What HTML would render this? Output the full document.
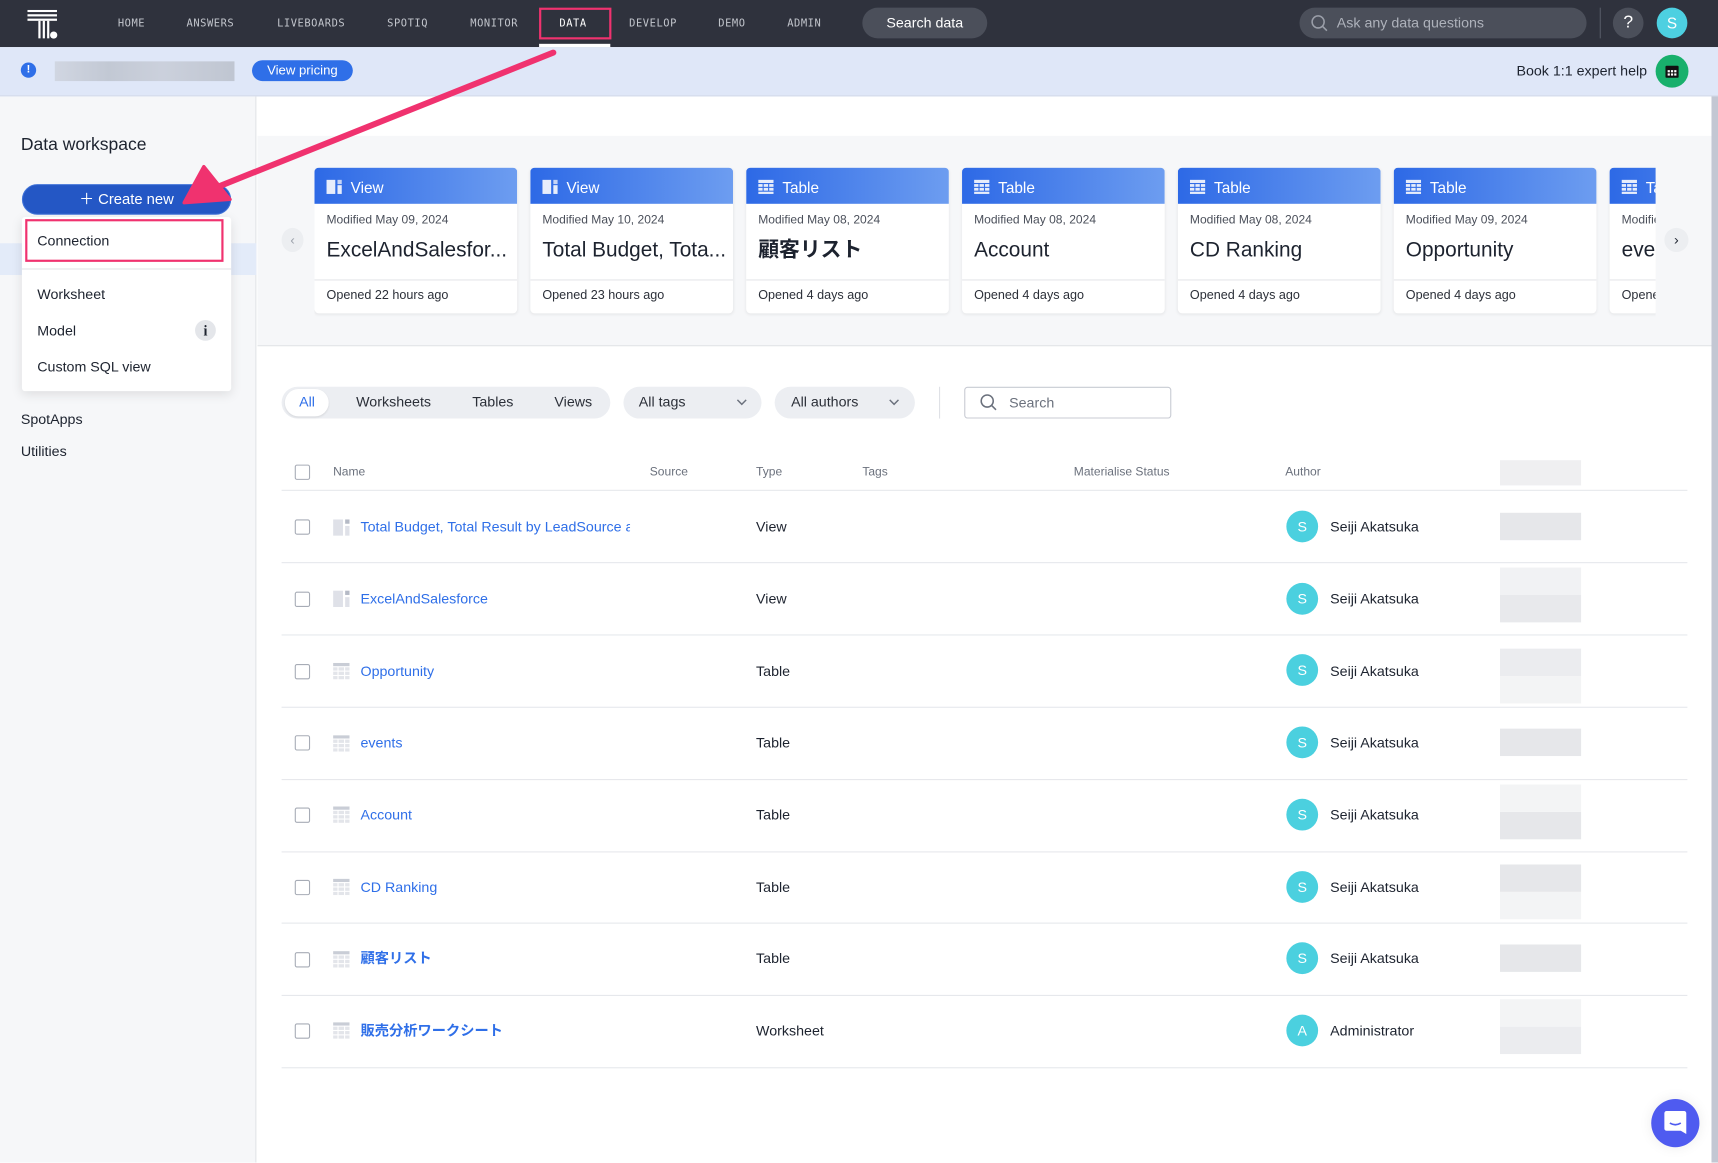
<!DOCTYPE html>
<html><head><meta charset="utf-8">
<style>
*{box-sizing:border-box;margin:0;padding:0}
html,body{width:1718px;height:1163px;overflow:hidden;background:#fff}
body{font-family:"Liberation Sans","Noto Sans CJK JP",sans-serif;color:#1d232f}
#w{position:absolute;left:0;top:0;width:1568px;height:1061px;transform:scale(1.0957);transform-origin:0 0;overflow:hidden;background:#fff}
.a{position:absolute}
.nav{left:0;top:0;width:1568px;height:43px;background:#2f323d}
.ni{top:16px;font-family:"DejaVu Sans Mono","Liberation Mono",monospace;font-size:9.5px;color:#c3c6cd;letter-spacing:.5px;transform:translateX(-50%)}
.card{width:185px;height:133px;top:153px;background:#fff;border-radius:4px;box-shadow:0 1px 3px rgba(0,0,0,.08);overflow:hidden}
.card .h{height:33px;background:linear-gradient(90deg,#2d69e6,#6d9df0);color:#fff;font-size:14px;padding:10px 0 0 33px;position:relative}
.card .h i{position:absolute;left:11px;top:11px;width:14px;height:13px}
.card .m{font-size:11px;color:#4a4f5a;padding:9px 11px 0;line-height:13px}
.card .t{font-size:19px;line-height:22px;color:#1d232f;padding:10px 11px 0;white-space:nowrap;height:42px}
.card .o{border-top:1px solid #e4e6ea;margin-top:5px;font-size:11.5px;color:#2b2f38;padding:8px 11px}
.row{left:257px;width:1283px;height:1px;background:#e6e8ec}
.cb{width:14px;height:14px;border:1px solid #a7acb6;border-radius:2px;left:269px}
.nm{left:329px;font-size:13px;line-height:16px;color:#2f6fe8}
.ty{left:690px;font-size:13px;line-height:16px;color:#1d232f}
.av{left:1174px;width:29px;height:29px;border-radius:50%;background:#4bd0df;color:#fff;font-size:13px;text-align:center;line-height:29px}
.au{left:1214px;font-size:13px;line-height:16px;color:#1d232f}
.bl{left:1369px;width:74px;height:25px;background:#e6e7ea}
.th{top:425px;font-size:11px;color:#6b717d}
.si{left:34px;font-size:13px;color:#1d232f}
</style></head><body><div id="w">

<div class="a nav"></div>
<svg class="a" style="left:25px;top:9px" width="28" height="27" viewBox="0 0 28 27"><g fill="#fff"><rect x="0" y="0" width="27" height="2"/><rect x="0" y="4" width="27" height="2"/><rect x="0" y="8" width="27" height="2"/><rect x="10" y="10" width="2" height="16"/><rect x="14" y="10" width="2" height="16"/><rect x="18" y="10" width="2" height="16"/><circle cx="24" cy="23" r="3.3"/></g></svg>
<div class="a ni" style="left:120px">HOME</div>
<div class="a ni" style="left:192px">ANSWERS</div>
<div class="a ni" style="left:284px">LIVEBOARDS</div>
<div class="a ni" style="left:372px">SPOTIQ</div>
<div class="a ni" style="left:451px">MONITOR</div>
<div class="a ni" style="left:523px;color:#fff">DATA</div>
<div class="a ni" style="left:596px">DEVELOP</div>
<div class="a ni" style="left:668px">DEMO</div>
<div class="a ni" style="left:734px">ADMIN</div>
<div class="a" style="left:492px;top:7px;width:66px;height:29px;border:2px solid #f0326f"></div>
<div class="a" style="left:492px;top:40px;width:65px;height:3px;background:#fff"></div>
<div class="a" style="left:787px;top:7px;width:114px;height:28px;border-radius:14px;background:#4b4f5a;color:#fff;font-size:13px;text-align:center;line-height:28px">Search data</div>
<div class="a" style="left:1186px;top:7px;width:262px;height:28px;border-radius:14px;background:#4b4f5a"></div>
<svg class="a" style="left:1196px;top:13px" width="17" height="17" viewBox="0 0 17 17"><circle cx="7" cy="7" r="5.5" fill="none" stroke="#9a9ea8" stroke-width="1.4"/><path d="M11 11l4 4" stroke="#9a9ea8" stroke-width="1.4"/></svg>
<div class="a" style="left:1220px;top:13px;font-size:13px;color:#aeb2bb">Ask any data questions</div>
<div class="a" style="left:1460px;top:7px;width:1px;height:28px;background:#555a66"></div>
<div class="a" style="left:1472px;top:7px;width:28px;height:28px;border-radius:50%;background:#4b4f5a;color:#fff;font-size:16px;text-align:center;line-height:28px">?</div>
<div class="a" style="left:1512px;top:7px;width:28px;height:28px;border-radius:50%;background:#4dd0e1;color:#fff;font-size:14px;text-align:center;line-height:28px">S</div>

<div class="a" style="left:0;top:43px;width:1568px;height:45px;background:#dfe7f8;border-bottom:1px solid #d3dbea"></div>
<div class="a" style="left:19px;top:57px;width:14px;height:14px;border-radius:50%;background:#2f6fe8;color:#fff;font-size:10px;font-weight:bold;text-align:center;line-height:14px">!</div>
<div class="a" style="left:50px;top:56px;width:164px;height:18px;background:linear-gradient(90deg,#cfd4df,#bfc5d0 30%,#c9ced9 60%,#bcc2cd);opacity:.9"></div>
<div class="a" style="left:230px;top:55px;width:92px;height:19px;border-radius:10px;background:#2f6fe8;color:#fff;font-size:12px;text-align:center;line-height:19px">View pricing</div>
<div class="a" style="left:1384px;top:57px;font-size:13px;color:#1d232f">Book 1:1 expert help</div>
<div class="a" style="left:1511px;top:50px;width:30px;height:30px;border-radius:50%;background:#18b06c"></div>
<svg class="a" style="left:1519px;top:58px" width="14" height="14" viewBox="0 0 14 14"><rect x="1" y="2" width="12" height="11" rx="1" fill="#111"/><g fill="#fff"><rect x="3" y="6" width="2" height="2"/><rect x="6" y="6" width="2" height="2"/><rect x="9" y="6" width="2" height="2"/><rect x="3" y="9" width="2" height="2"/><rect x="6" y="9" width="2" height="2"/><rect x="9" y="9" width="2" height="2"/></g></svg>

<div class="a" style="left:0;top:88px;width:234px;height:973px;background:#f6f7f9;border-right:1px solid #e2e4e8"></div>
<div class="a" style="left:0;top:222px;width:234px;height:29px;background:#e3ebf9"></div>
<div class="a" style="left:19px;top:124px;font-size:16px;color:#1d232f">Data workspace</div>
<div class="a si" style="left:19px;top:375px">SpotApps</div>
<div class="a si" style="left:19px;top:404px">Utilities</div>
<div class="a" style="left:20px;top:168px;width:191px;height:28px;border-radius:14px;background:#2457c5;border:1px solid #3f72d8;color:#fff;font-size:13.5px;text-align:center;line-height:26px">＋ Create new</div>
<div class="a" style="left:20px;top:198px;width:191px;height:159px;background:#fff;border-radius:3px;box-shadow:0 3px 10px rgba(0,0,0,.1)"></div>
<div class="a" style="left:20px;top:245px;width:191px;height:1px;background:#e2e4e8"></div>
<div class="a" style="left:23px;top:200px;width:181px;height:39px;border:2px solid #f0326f"></div>
<div class="a si" style="top:212px">Connection</div>
<div class="a si" style="top:261px">Worksheet</div>
<div class="a si" style="top:294px">Model</div>
<div class="a" style="left:178px;top:292px;width:19px;height:19px;border-radius:50%;background:#e4e6ea;font-family:'Liberation Serif',serif;font-size:13px;font-weight:bold;text-align:center;line-height:19px">i</div>
<div class="a si" style="top:327px">Custom SQL view</div>

<div class="a" style="left:235px;top:124px;width:1327px;height:192px;background:#f6f7f9;border-bottom:1px solid #e2e4e8"></div>
<div class="a" style="left:257px;top:208px;width:20px;height:22px;border-radius:50%;background:#eceef1;color:#9aa0aa;font-size:12px;text-align:center;line-height:22px">‹</div>

<div class="a" style="left:287px;top:153px;width:1224px;height:140px;overflow:hidden">
<div class="a card" style="left:0;top:0"><div class="h"><i><svg width="14" height="13"><rect x="0" y="0" width="8" height="13" fill="#e7edfb"/><rect x="10" y="0" width="4" height="4" fill="#c6d4f5"/><rect x="10" y="5" width="4" height="8" fill="#e7edfb"/></svg></i>View</div><div class="m">Modified May 09, 2024</div><div class="t">ExcelAndSalesfor...</div><div class="o">Opened 22 hours ago</div></div>
<div class="a card" style="left:197px;top:0"><div class="h"><i><svg width="14" height="13"><rect x="0" y="0" width="8" height="13" fill="#e7edfb"/><rect x="10" y="0" width="4" height="4" fill="#c6d4f5"/><rect x="10" y="5" width="4" height="8" fill="#e7edfb"/></svg></i>View</div><div class="m">Modified May 10, 2024</div><div class="t">Total Budget, Tota...</div><div class="o">Opened 23 hours ago</div></div>
<div class="a card" style="left:394px;top:0"><div class="h"><i><svg width="14" height="13"><g fill="#e7edfb"><rect x="0" y="0" width="14" height="3"/><rect x="0" y="4" width="4" height="2.5"/><rect x="5" y="4" width="4" height="2.5"/><rect x="10" y="4" width="4" height="2.5"/><rect x="0" y="7.5" width="4" height="2.5"/><rect x="5" y="7.5" width="4" height="2.5"/><rect x="10" y="7.5" width="4" height="2.5"/><rect x="0" y="11" width="14" height="2"/></g></svg></i>Table</div><div class="m">Modified May 08, 2024</div><div class="t" style="font-weight:bold">顧客リスト</div><div class="o">Opened 4 days ago</div></div>
<div class="a card" style="left:591px;top:0"><div class="h"><i><svg width="14" height="13"><g fill="#e7edfb"><rect x="0" y="0" width="14" height="3"/><rect x="0" y="4" width="4" height="2.5"/><rect x="5" y="4" width="4" height="2.5"/><rect x="10" y="4" width="4" height="2.5"/><rect x="0" y="7.5" width="4" height="2.5"/><rect x="5" y="7.5" width="4" height="2.5"/><rect x="10" y="7.5" width="4" height="2.5"/><rect x="0" y="11" width="14" height="2"/></g></svg></i>Table</div><div class="m">Modified May 08, 2024</div><div class="t">Account</div><div class="o">Opened 4 days ago</div></div>
<div class="a card" style="left:788px;top:0"><div class="h"><i><svg width="14" height="13"><g fill="#e7edfb"><rect x="0" y="0" width="14" height="3"/><rect x="0" y="4" width="4" height="2.5"/><rect x="5" y="4" width="4" height="2.5"/><rect x="10" y="4" width="4" height="2.5"/><rect x="0" y="7.5" width="4" height="2.5"/><rect x="5" y="7.5" width="4" height="2.5"/><rect x="10" y="7.5" width="4" height="2.5"/><rect x="0" y="11" width="14" height="2"/></g></svg></i>Table</div><div class="m">Modified May 08, 2024</div><div class="t">CD Ranking</div><div class="o">Opened 4 days ago</div></div>
<div class="a card" style="left:985px;top:0"><div class="h"><i><svg width="14" height="13"><g fill="#e7edfb"><rect x="0" y="0" width="14" height="3"/><rect x="0" y="4" width="4" height="2.5"/><rect x="5" y="4" width="4" height="2.5"/><rect x="10" y="4" width="4" height="2.5"/><rect x="0" y="7.5" width="4" height="2.5"/><rect x="5" y="7.5" width="4" height="2.5"/><rect x="10" y="7.5" width="4" height="2.5"/><rect x="0" y="11" width="14" height="2"/></g></svg></i>Table</div><div class="m">Modified May 09, 2024</div><div class="t">Opportunity</div><div class="o">Opened 4 days ago</div></div>
<div class="a card" style="left:1182px;top:0"><div class="h"><i><svg width="14" height="13"><g fill="#e7edfb"><rect x="0" y="0" width="14" height="3"/><rect x="0" y="4" width="4" height="2.5"/><rect x="5" y="4" width="4" height="2.5"/><rect x="10" y="4" width="4" height="2.5"/><rect x="0" y="7.5" width="4" height="2.5"/><rect x="5" y="7.5" width="4" height="2.5"/><rect x="10" y="7.5" width="4" height="2.5"/><rect x="0" y="11" width="14" height="2"/></g></svg></i>Table</div><div class="m">Modified May 08, 2024</div><div class="t">events</div><div class="o">Opened 4 days ago</div></div>
</div>
<div class="a" style="left:1519px;top:208px;width:22px;height:22px;border-radius:50%;background:#eceef1;color:#1d232f;font-size:13px;text-align:center;line-height:21px">›</div>
<div class="a" style="left:1562px;top:88px;width:6px;height:973px;background:#c3c7d3"></div>

<div class="a" style="left:257px;top:353px;width:300px;height:29px;border-radius:15px;background:#eceef2"></div>
<div class="a" style="left:260px;top:355px;width:40px;height:25px;border-radius:13px;background:#fff;box-shadow:0 1px 2px rgba(0,0,0,.1)"></div>
<div class="a" style="left:273px;top:359px;font-size:13px;color:#2f6fe8">All</div>
<div class="a" style="left:325px;top:359px;font-size:13px;color:#2b2f38">Worksheets</div>
<div class="a" style="left:431px;top:359px;font-size:13px;color:#2b2f38">Tables</div>
<div class="a" style="left:506px;top:359px;font-size:13px;color:#2b2f38">Views</div>
<div class="a" style="left:569px;top:353px;width:126px;height:29px;border-radius:15px;background:#eceef2"></div>
<div class="a" style="left:583px;top:359px;font-size:13px;color:#2b2f38">All tags</div>
<div class="a" style="left:707px;top:353px;width:128px;height:29px;border-radius:15px;background:#eceef2"></div>
<div class="a" style="left:722px;top:359px;font-size:13px;color:#2b2f38">All authors</div>
<svg class="a" style="left:672px;top:363px" width="10" height="8"><path d="M1 2l4 4 4-4" fill="none" stroke="#6b717d" stroke-width="1.3"/></svg>
<svg class="a" style="left:811px;top:363px" width="10" height="8"><path d="M1 2l4 4 4-4" fill="none" stroke="#6b717d" stroke-width="1.3"/></svg>
<div class="a" style="left:857px;top:353px;width:1px;height:29px;background:#dfe1e6"></div>
<div class="a" style="left:880px;top:353px;width:189px;height:29px;border:1px solid #c8cbd3;border-radius:3px"></div>
<svg class="a" style="left:894px;top:359px" width="17" height="17"><circle cx="7" cy="7" r="5.5" fill="none" stroke="#6b717d" stroke-width="1.4"/><path d="M11 11l4 4" stroke="#6b717d" stroke-width="1.4"/></svg>
<div class="a" style="left:921px;top:360px;font-size:13px;color:#6b717d">Search</div>

<div class="a cb" style="top:424px"></div>
<div class="a th" style="left:304px">Name</div>
<div class="a th" style="left:593px">Source</div>
<div class="a th" style="left:690px">Type</div>
<div class="a th" style="left:787px">Tags</div>
<div class="a th" style="left:980px">Materialise Status</div>
<div class="a th" style="left:1173px">Author</div>
<div class="a" style="left:1369px;top:420px;width:74px;height:23px;background:#efeff1"></div>
<div class="a row" style="top:447px"></div>

<div class="a cb" style="top:474px"></div><svg class="a" style="left:304px;top:474px" width="15" height="15"><rect x="0" y="0" width="9" height="15" fill="#dfe1e8"/><rect x="11" y="0" width="4" height="4" fill="#b5bac6"/><rect x="11" y="6" width="4" height="9" fill="#dfe1e8"/></svg>
<div class="a nm" style="top:473px;width:246px;overflow:hidden;white-space:nowrap">Total Budget, Total Result by LeadSource a</div><div class="a ty" style="top:473px">View</div><div class="a av" style="top:466px">S</div><div class="a au" style="top:473px">Seiji Akatsuka</div><div class="a bl" style="top:468px"></div>
<div class="a row" style="top:513px"></div>

<div class="a cb" style="top:540px"></div><svg class="a" style="left:304px;top:539px" width="15" height="15"><rect x="0" y="0" width="9" height="15" fill="#dfe1e8"/><rect x="11" y="0" width="4" height="4" fill="#b5bac6"/><rect x="11" y="6" width="4" height="9" fill="#dfe1e8"/></svg>
<div class="a nm" style="top:539px">ExcelAndSalesforce</div><div class="a ty" style="top:539px">View</div><div class="a av" style="top:532px">S</div><div class="a au" style="top:539px">Seiji Akatsuka</div><div class="a bl" style="top:543px;background:#e8e9ec"></div><div class="a bl" style="top:518px;background:#f1f2f4"></div>
<div class="a row" style="top:579px"></div>

<div class="a cb" style="top:606px"></div><svg class="a" style="left:304px;top:605px" width="15" height="15"><rect width="15" height="3" fill="#c9cdd6"/><g fill="#e3e5ea"><rect y="4" width="4" height="3"/><rect x="5" y="4" width="5" height="3"/><rect x="11" y="4" width="4" height="3"/><rect y="8" width="4" height="3"/><rect x="5" y="8" width="5" height="3"/><rect x="11" y="8" width="4" height="3"/><rect y="12" width="4" height="3"/><rect x="5" y="12" width="5" height="3"/><rect x="11" y="12" width="4" height="3"/></g></svg>
<div class="a nm" style="top:605px">Opportunity</div><div class="a ty" style="top:605px">Table</div><div class="a av" style="top:597px">S</div><div class="a au" style="top:605px">Seiji Akatsuka</div><div class="a bl" style="top:592px;background:#ebecef"></div><div class="a bl" style="top:617px;background:#f3f4f5"></div>
<div class="a row" style="top:645px"></div>

<div class="a cb" style="top:671px"></div><svg class="a" style="left:304px;top:671px" width="15" height="15"><rect width="15" height="3" fill="#c9cdd6"/><g fill="#e3e5ea"><rect y="4" width="4" height="3"/><rect x="5" y="4" width="5" height="3"/><rect x="11" y="4" width="4" height="3"/><rect y="8" width="4" height="3"/><rect x="5" y="8" width="5" height="3"/><rect x="11" y="8" width="4" height="3"/><rect y="12" width="4" height="3"/><rect x="5" y="12" width="5" height="3"/><rect x="11" y="12" width="4" height="3"/></g></svg>
<div class="a nm" style="top:670px">events</div><div class="a ty" style="top:670px">Table</div><div class="a av" style="top:663px">S</div><div class="a au" style="top:670px">Seiji Akatsuka</div><div class="a bl" style="top:665px"></div>
<div class="a row" style="top:711px"></div>

<div class="a cb" style="top:737px"></div><svg class="a" style="left:304px;top:736px" width="15" height="15"><rect width="15" height="3" fill="#c9cdd6"/><g fill="#e3e5ea"><rect y="4" width="4" height="3"/><rect x="5" y="4" width="5" height="3"/><rect x="11" y="4" width="4" height="3"/><rect y="8" width="4" height="3"/><rect x="5" y="8" width="5" height="3"/><rect x="11" y="8" width="4" height="3"/><rect y="12" width="4" height="3"/><rect x="5" y="12" width="5" height="3"/><rect x="11" y="12" width="4" height="3"/></g></svg>
<div class="a nm" style="top:736px">Account</div><div class="a ty" style="top:736px">Table</div><div class="a av" style="top:729px">S</div><div class="a au" style="top:736px">Seiji Akatsuka</div><div class="a bl" style="top:741px"></div><div class="a bl" style="top:716px;background:#f3f4f5"></div>
<div class="a row" style="top:777px"></div>

<div class="a cb" style="top:803px"></div><svg class="a" style="left:304px;top:802px" width="15" height="15"><rect width="15" height="3" fill="#c9cdd6"/><g fill="#e3e5ea"><rect y="4" width="4" height="3"/><rect x="5" y="4" width="5" height="3"/><rect x="11" y="4" width="4" height="3"/><rect y="8" width="4" height="3"/><rect x="5" y="8" width="5" height="3"/><rect x="11" y="8" width="4" height="3"/><rect y="12" width="4" height="3"/><rect x="5" y="12" width="5" height="3"/><rect x="11" y="12" width="4" height="3"/></g></svg>
<div class="a nm" style="top:802px">CD Ranking</div><div class="a ty" style="top:802px">Table</div><div class="a av" style="top:795px">S</div><div class="a au" style="top:802px">Seiji Akatsuka</div><div class="a bl" style="top:789px"></div><div class="a bl" style="top:814px;background:#f3f4f5"></div>
<div class="a row" style="top:842px"></div>

<div class="a cb" style="top:869px"></div><svg class="a" style="left:304px;top:868px" width="15" height="15"><rect width="15" height="3" fill="#c9cdd6"/><g fill="#e3e5ea"><rect y="4" width="4" height="3"/><rect x="5" y="4" width="5" height="3"/><rect x="11" y="4" width="4" height="3"/><rect y="8" width="4" height="3"/><rect x="5" y="8" width="5" height="3"/><rect x="11" y="8" width="4" height="3"/><rect y="12" width="4" height="3"/><rect x="5" y="12" width="5" height="3"/><rect x="11" y="12" width="4" height="3"/></g></svg>
<div class="a nm" style="top:867px;font-weight:bold">顧客リスト</div><div class="a ty" style="top:867px">Table</div><div class="a av" style="top:860px">S</div><div class="a au" style="top:867px">Seiji Akatsuka</div><div class="a bl" style="top:862px"></div>
<div class="a row" style="top:908px"></div>

<div class="a cb" style="top:934px"></div><svg class="a" style="left:304px;top:933px" width="15" height="15"><rect width="15" height="3" fill="#c9cdd6"/><g fill="#e3e5ea"><rect y="4" width="4" height="3"/><rect x="5" y="4" width="5" height="3"/><rect x="11" y="4" width="4" height="3"/><rect y="8" width="4" height="3"/><rect x="5" y="8" width="5" height="3"/><rect x="11" y="8" width="4" height="3"/><rect y="12" width="4" height="3"/><rect x="5" y="12" width="5" height="3"/><rect x="11" y="12" width="4" height="3"/></g></svg>
<div class="a nm" style="top:933px;font-weight:bold">販売分析ワークシート</div><div class="a ty" style="top:933px">Worksheet</div><div class="a av" style="top:926px">A</div><div class="a au" style="top:933px">Administrator</div><div class="a bl" style="top:937px;background:#ebecef"></div><div class="a bl" style="top:912px;background:#f3f4f5"></div>
<div class="a row" style="top:974px"></div>

<div class="a" style="left:1507px;top:1003px;width:44px;height:44px;border-radius:50%;background:#4f5bf0;box-shadow:0 0 12px rgba(0,0,0,.08)"></div>
<svg class="a" style="left:1518px;top:1013px" width="22" height="24"><path d="M3 1h16a2 2 0 0 1 2 2v19l-5-3H3a2 2 0 0 1-2-2V3a2 2 0 0 1 2-2z" fill="#fff"/><path d="M6 12q5 3 10 0" fill="none" stroke="#4f5bf0" stroke-width="1.5"/></svg>

<svg class="a" style="left:0;top:0" width="600" height="220"><path d="M505 48L200 170" stroke="#f0326f" stroke-width="5.5" stroke-linecap="round"/><path d="M168 185L186 152L210 182Z" fill="#f0326f" stroke="#f0326f" stroke-width="3" stroke-linejoin="round"/></svg>

</div></body></html>
